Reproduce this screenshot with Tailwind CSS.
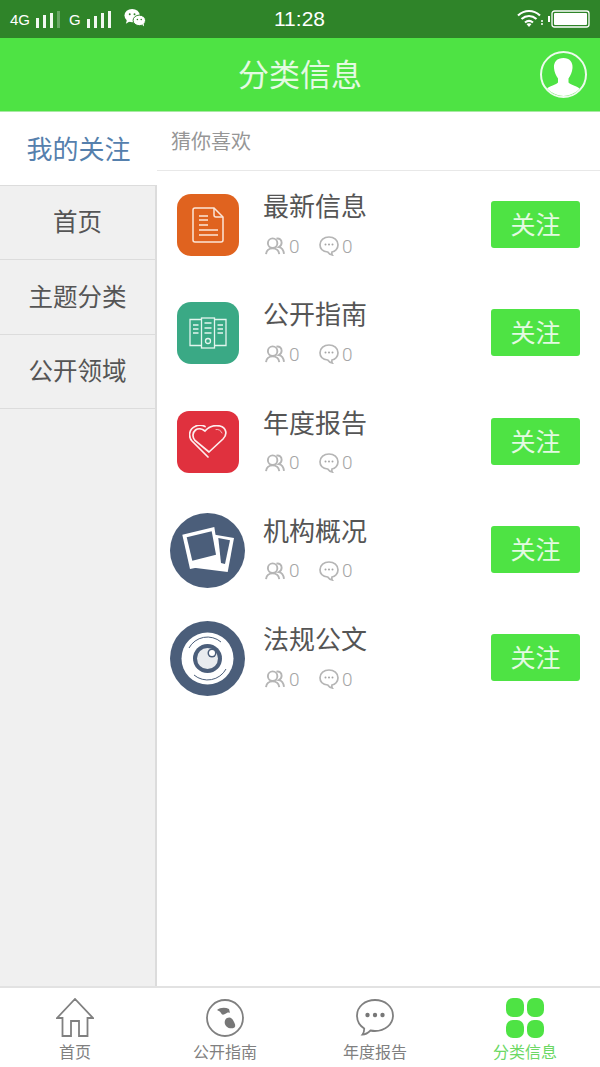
<!DOCTYPE html>
<html lang="zh-CN">
<head>
  <meta charset="UTF-8" />
  <meta name="viewport" content="width=device-width, initial-scale=1.0"/>
  <title>分类信息</title>
  <script src="https://cdn.jsdelivr.net/npm/@tailwindcss/browser@4"></script>
</head>
<body class="bg-white font-['Noto_Sans_CJK_SC','Liberation_Sans',sans-serif]">
  <div class="w-[600px] h-[1067px] flex flex-col overflow-hidden">

    <!-- Status bar -->
    <div class="h-[38px] bg-[#2f8429] text-white flex items-center pl-[10px] pr-[10px] relative font-['Liberation_Sans',sans-serif]">
      <span class="text-[15px] leading-none">4G</span>
      <svg class="ml-[6px]" width="24" height="17" viewBox="0 0 24 17" fill="#f2f8f1"><rect x="0" y="7" width="3" height="10"/><rect x="7" y="4" width="3" height="13"/><rect x="14" y="2" width="3" height="15"/><rect x="21" y="0" width="3" height="17" opacity=".3"/></svg>
      <span class="text-[15px] leading-none ml-[9px]">G</span>
      <svg class="ml-[6px]" width="24" height="17" viewBox="0 0 24 17" fill="#f2f8f1"><rect x="0" y="8" width="3" height="9"/><rect x="7" y="5" width="3" height="12"/><rect x="14" y="2" width="3" height="15"/><rect x="21" y="0" width="3" height="17"/></svg>
      <svg class="ml-[13px] mb-[3px]" width="22" height="20" viewBox="0 0 23 20" fill="#fff"><ellipse cx="8.500" cy="7.500" rx="8" ry="7"/><path d="M3 12l-1 4 5-3z"/><ellipse cx="16" cy="12.500" rx="6.500" ry="5.500" stroke="#2f8429"/><path d="M19 17l2 2-.5-4z"/><circle cx="6" cy="6" r="1" fill="#2f8429"/><circle cx="11" cy="6" r="1" fill="#2f8429"/><circle cx="14" cy="11.500" r=".8" fill="#2f8429"/><circle cx="18" cy="11.500" r=".8" fill="#2f8429"/></svg>
      <span class="absolute left-[274px] top-[7px] text-[21px] leading-[24px]">11:28</span>
      <div class="ml-auto flex items-center gap-[4px] mb-[1px]">
        <svg width="27" height="19" viewBox="0 0 27 19" fill="none" stroke="#fff" stroke-width="2.200"><path d="M1 6.500c6.500-6 15.500-6 22 0"/><path d="M4.500 10c4.500-4 10.500-4 15 0"/><path d="M8 13.500c2.500-2 5.500-2 8 0"/><path d="M12 18l-2.500-3c1.500-1 3.500-1 5 0z" fill="#fff" stroke="none"/><path d="M25 11v6" stroke-width="1.500" stroke-dasharray="2 1"/></svg>
        <svg width="42" height="18" viewBox="0 0 42 18"><rect x="0" y="6" width="2" height="6" fill="#fff"/><rect x="4" y="1" width="37" height="16" rx="2.500" fill="none" stroke="#fff" stroke-width="1.300"/><rect x="6" y="3" width="33" height="12" rx="1" fill="#fff"/></svg>
      </div>
    </div>

    <!-- Header -->
    <div class="h-[74px] bg-[#4ee344] border-b border-[#a9e8a4] flex items-center justify-center relative">
      <h1 class="text-[31px] text-[#e4fae2] font-normal leading-none mb-[4px]">分类信息</h1>
      <div class="absolute left-[540px] top-[13px] w-[47px] h-[47px] rounded-full border-2 border-[#eefbed] overflow-hidden">
        <svg width="43" height="43" viewBox="0 0 43 43" fill="#fff"><path d="M21.500 5c6 0 9.500 4 9 10-.3 4-2 8-4 10.500v4c2.500 2.500 9 3.500 13 7.500v6H3v-6c4-4 10.500-5 13-7.500v-4c-2-2.500-3.700-6.500-4-10.500-.5-6 3-10 9.500-10z"/></svg>
      </div>
    </div>

    <div class="flex flex-1 min-h-0">
      <!-- Sidebar -->
      <div class="w-[157px] shrink-0 flex flex-col">
        <div class="h-[73px] bg-white flex items-center justify-center text-[26px] leading-none text-[#5580ad] pb-[2px]">我的关注</div>
        <div class="flex-1 bg-[#f0f0f0] border-t border-r-2 border-[#dcdcdc]">
          <div class="h-[74.300px] border-b border-[#dcdcdc] flex items-center justify-center text-[24.500px] leading-none text-[#555555] pb-[2px]">首页</div>
          <div class="h-[74.300px] border-b border-[#dcdcdc] flex items-center justify-center text-[24.500px] leading-none text-[#555555] pb-[2px]">主题分类</div>
          <div class="h-[74.300px] border-b border-[#dcdcdc] flex items-center justify-center text-[24.500px] leading-none text-[#555555] pb-[2px]">公开领域</div>
        </div>
      </div>

      <!-- Content -->
      <div class="flex-1 min-w-0">
        <div class="h-[59px] border-b border-[#e8e8e8] pl-[14px] pt-[16px] text-[20px] leading-[26px] text-[#969696]">猜你喜欢</div>

        <div class="h-[108.300px] flex items-start pt-[23px]">
          <div class="w-[106px] pl-[20px] shrink-0">
            <div class="w-[62px] h-[62px] rounded-[14px] bg-[#e0631f] flex items-center justify-center">
              <svg width="32" height="36" viewBox="0 0 32 36" fill="none" stroke="#fbe6d8" stroke-width="1.500"><path d="M3 1h19l9 9v23a2 2 0 0 1-2 2H3a2 2 0 0 1-2-2V3a2 2 0 0 1 2-2z"/><path d="M22 1v7a2 2 0 0 0 2 2h7"/><path d="M7 9h9M7 13h9M7 18h9M7 23h19M7 28h19"/></svg>
            </div>
          </div>
          <div class="flex-1 min-w-0">
            <div class="text-[26px] leading-[26px] text-[#555555] -mt-[2px]">最新信息</div>
            <div class="flex items-center h-[24px] mt-[16px] ml-[2px] text-[#a5a5a5] text-[19px] leading-none font-['Roboto',sans-serif] font-light">
              <svg width="20" height="18" viewBox="0 0 21 19" fill="none" stroke="#b5b5b5" stroke-width="2"><circle cx="8" cy="6.500" r="5"/><path d="M1 18c.5-4 3-6 7-6s6.500 2 7 6"/><path d="M12 1.700c3-.8 5.500 1.300 5.500 4.500 0 2-1 3.500-3 4.500 3 .5 5 3 5.500 7"/></svg>
              <span class="ml-[4px] w-[10px]">0</span>
              <svg class="ml-[20px]" width="20" height="20" viewBox="0 0 20 20" fill="none" stroke="#b5b5b5" stroke-width="1.700"><path d="M10 1c5 0 9 3.300 9 7.800 0 4-3 6.700-6 7.200-.2 1.300-.3 2.300.2 3-2-.5-3.700-1.800-4.500-3C4 15.500 1 12.800 1 8.800 1 4.300 5 1 10 1z"/><circle cx="6.500" cy="8.500" r="1" fill="#a5a5a5" stroke="none"/><circle cx="10" cy="8.500" r="1" fill="#a5a5a5" stroke="none"/><circle cx="13.500" cy="8.500" r="1" fill="#a5a5a5" stroke="none"/></svg>
              <span class="ml-[3px]">0</span>
            </div>
          </div>
          <div class="w-[89px] h-[47px] mr-[20px] mt-[7px] shrink-0 rounded-[3px] bg-[#4ee344] flex items-center justify-center text-[25px] leading-none text-[#e4fae2] pb-[2px]">关注</div>
        </div>

        <div class="h-[108.300px] flex items-start pt-[23px]">
          <div class="w-[106px] pl-[20px] shrink-0">
            <div class="w-[62px] h-[62px] rounded-[14px] bg-[#3aa985] flex items-center justify-center">
              <svg width="38" height="32" viewBox="0 0 38 32" fill="none" stroke="#e3f5ee" stroke-width="1.300"><path d="M12.500 2.500H1v26h11.500"/><rect x="12.500" y="1" width="13" height="30"/><path d="M25.500 2.500H37v26H25.500"/><path d="M4 8h5.500M4 12h5.500M4 16h5.500M15.500 6h7M15.500 11h7M15.500 16h7M28.500 8H34M28.500 12H34M28.500 16H34"/><circle cx="19" cy="24" r="2.500"/></svg>
            </div>
          </div>
          <div class="flex-1 min-w-0">
            <div class="text-[26px] leading-[26px] text-[#555555] -mt-[2px]">公开指南</div>
            <div class="flex items-center h-[24px] mt-[16px] ml-[2px] text-[#a5a5a5] text-[19px] leading-none font-['Roboto',sans-serif] font-light">
              <svg width="20" height="18" viewBox="0 0 21 19" fill="none" stroke="#b5b5b5" stroke-width="2"><circle cx="8" cy="6.500" r="5"/><path d="M1 18c.5-4 3-6 7-6s6.500 2 7 6"/><path d="M12 1.700c3-.8 5.500 1.300 5.500 4.500 0 2-1 3.500-3 4.500 3 .5 5 3 5.500 7"/></svg>
              <span class="ml-[4px] w-[10px]">0</span>
              <svg class="ml-[20px]" width="20" height="20" viewBox="0 0 20 20" fill="none" stroke="#b5b5b5" stroke-width="1.700"><path d="M10 1c5 0 9 3.300 9 7.800 0 4-3 6.700-6 7.200-.2 1.300-.3 2.300.2 3-2-.5-3.700-1.800-4.500-3C4 15.500 1 12.800 1 8.800 1 4.300 5 1 10 1z"/><circle cx="6.500" cy="8.500" r="1" fill="#a5a5a5" stroke="none"/><circle cx="10" cy="8.500" r="1" fill="#a5a5a5" stroke="none"/><circle cx="13.500" cy="8.500" r="1" fill="#a5a5a5" stroke="none"/></svg>
              <span class="ml-[3px]">0</span>
            </div>
          </div>
          <div class="w-[89px] h-[47px] mr-[20px] mt-[7px] shrink-0 rounded-[3px] bg-[#4ee344] flex items-center justify-center text-[25px] leading-none text-[#e4fae2] pb-[2px]">关注</div>
        </div>

        <div class="h-[108.300px] flex items-start pt-[23px]">
          <div class="w-[106px] pl-[20px] shrink-0">
            <div class="w-[62px] h-[62px] rounded-[12px] bg-[#e0313e] flex items-center justify-center">
              <svg width="38" height="33" viewBox="0 0 38 33" fill="none" stroke="#fdeeee" stroke-width="1.700" stroke-linecap="round"><path d="M20 27L34 14C39 9 37 2.500 31 1C26 0 20 1.500 16 6C13 3.500 9 3 6.500 5C3.500 7.500 3 12 6 15.500L20 27"/><path d="M19 32L3 16C-1 11.500 0 4 6 1.500C9 0 13 0 16 1.500"/><path d="M27 4.500C29.500 4 32 5.500 33 8" stroke-width="1" opacity=".7"/></svg>
            </div>
          </div>
          <div class="flex-1 min-w-0">
            <div class="text-[26px] leading-[26px] text-[#555555] -mt-[2px]">年度报告</div>
            <div class="flex items-center h-[24px] mt-[16px] ml-[2px] text-[#a5a5a5] text-[19px] leading-none font-['Roboto',sans-serif] font-light">
              <svg width="20" height="18" viewBox="0 0 21 19" fill="none" stroke="#b5b5b5" stroke-width="2"><circle cx="8" cy="6.500" r="5"/><path d="M1 18c.5-4 3-6 7-6s6.500 2 7 6"/><path d="M12 1.700c3-.8 5.500 1.300 5.500 4.500 0 2-1 3.500-3 4.500 3 .5 5 3 5.500 7"/></svg>
              <span class="ml-[4px] w-[10px]">0</span>
              <svg class="ml-[20px]" width="20" height="20" viewBox="0 0 20 20" fill="none" stroke="#b5b5b5" stroke-width="1.700"><path d="M10 1c5 0 9 3.300 9 7.800 0 4-3 6.700-6 7.200-.2 1.300-.3 2.300.2 3-2-.5-3.700-1.800-4.500-3C4 15.500 1 12.800 1 8.800 1 4.300 5 1 10 1z"/><circle cx="6.500" cy="8.500" r="1" fill="#a5a5a5" stroke="none"/><circle cx="10" cy="8.500" r="1" fill="#a5a5a5" stroke="none"/><circle cx="13.500" cy="8.500" r="1" fill="#a5a5a5" stroke="none"/></svg>
              <span class="ml-[3px]">0</span>
            </div>
          </div>
          <div class="w-[89px] h-[47px] mr-[20px] mt-[7px] shrink-0 rounded-[3px] bg-[#4ee344] flex items-center justify-center text-[25px] leading-none text-[#e4fae2] pb-[2px]">关注</div>
        </div>

        <div class="h-[108.300px] flex items-start pt-[23px]">
          <div class="w-[106px] pl-[13px] shrink-0 -mt-[6px]">
            <svg width="75" height="75" viewBox="0 0 75 75"><circle cx="37.500" cy="37.500" r="37.500" fill="#4b5e7a"/><path d="M45 21.700l19 3.300-6.300 34-37.700-4.700z" fill="#fff"/><path d="M48.300 25L60 27.300 55 51l-4-1z" fill="#4b5e7a"/><path d="M12.300 21.700L44.300 14 50 50 20 56z" fill="#fff"/><path d="M16.700 24.300l25-6 4.300 23.400-23.700 6z" fill="#4b5e7a"/></svg>
          </div>
          <div class="flex-1 min-w-0">
            <div class="text-[26px] leading-[26px] text-[#555555] -mt-[2px]">机构概况</div>
            <div class="flex items-center h-[24px] mt-[16px] ml-[2px] text-[#a5a5a5] text-[19px] leading-none font-['Roboto',sans-serif] font-light">
              <svg width="20" height="18" viewBox="0 0 21 19" fill="none" stroke="#b5b5b5" stroke-width="2"><circle cx="8" cy="6.500" r="5"/><path d="M1 18c.5-4 3-6 7-6s6.500 2 7 6"/><path d="M12 1.700c3-.8 5.500 1.300 5.500 4.500 0 2-1 3.500-3 4.500 3 .5 5 3 5.500 7"/></svg>
              <span class="ml-[4px] w-[10px]">0</span>
              <svg class="ml-[20px]" width="20" height="20" viewBox="0 0 20 20" fill="none" stroke="#b5b5b5" stroke-width="1.700"><path d="M10 1c5 0 9 3.300 9 7.800 0 4-3 6.700-6 7.200-.2 1.300-.3 2.300.2 3-2-.5-3.700-1.800-4.500-3C4 15.500 1 12.800 1 8.800 1 4.300 5 1 10 1z"/><circle cx="6.500" cy="8.500" r="1" fill="#a5a5a5" stroke="none"/><circle cx="10" cy="8.500" r="1" fill="#a5a5a5" stroke="none"/><circle cx="13.500" cy="8.500" r="1" fill="#a5a5a5" stroke="none"/></svg>
              <span class="ml-[3px]">0</span>
            </div>
          </div>
          <div class="w-[89px] h-[47px] mr-[20px] mt-[7px] shrink-0 rounded-[3px] bg-[#4ee344] flex items-center justify-center text-[25px] leading-none text-[#e4fae2] pb-[2px]">关注</div>
        </div>

        <div class="h-[108.300px] flex items-start pt-[23px]">
          <div class="w-[106px] pl-[13px] shrink-0 -mt-[6px]">
            <svg width="75" height="75" viewBox="0 0 75 75"><circle cx="37.500" cy="37.500" r="37.500" fill="#4b5e7a"/><circle cx="37.500" cy="37.500" r="26" fill="#fff"/><path d="M19 27a21 21 0 0 1 32-6" fill="none" stroke="#4b5e7a" stroke-width="1"/><path d="M56 48a21 21 0 0 1-32 6" fill="none" stroke="#4b5e7a" stroke-width="1"/><circle cx="37.500" cy="37.500" r="14.500" fill="#4b5e7a"/><circle cx="37.500" cy="37.500" r="10.500" fill="#e8ebef"/><circle cx="42" cy="32" r="4.500" fill="#4b5e7a"/><circle cx="42" cy="32" r="3" fill="#fff"/></svg>
          </div>
          <div class="flex-1 min-w-0">
            <div class="text-[26px] leading-[26px] text-[#555555] -mt-[2px]">法规公文</div>
            <div class="flex items-center h-[24px] mt-[16px] ml-[2px] text-[#a5a5a5] text-[19px] leading-none font-['Roboto',sans-serif] font-light">
              <svg width="20" height="18" viewBox="0 0 21 19" fill="none" stroke="#b5b5b5" stroke-width="2"><circle cx="8" cy="6.500" r="5"/><path d="M1 18c.5-4 3-6 7-6s6.500 2 7 6"/><path d="M12 1.700c3-.8 5.500 1.300 5.500 4.500 0 2-1 3.500-3 4.500 3 .5 5 3 5.500 7"/></svg>
              <span class="ml-[4px] w-[10px]">0</span>
              <svg class="ml-[20px]" width="20" height="20" viewBox="0 0 20 20" fill="none" stroke="#b5b5b5" stroke-width="1.700"><path d="M10 1c5 0 9 3.300 9 7.800 0 4-3 6.700-6 7.200-.2 1.300-.3 2.300.2 3-2-.5-3.700-1.800-4.500-3C4 15.500 1 12.800 1 8.800 1 4.300 5 1 10 1z"/><circle cx="6.500" cy="8.500" r="1" fill="#a5a5a5" stroke="none"/><circle cx="10" cy="8.500" r="1" fill="#a5a5a5" stroke="none"/><circle cx="13.500" cy="8.500" r="1" fill="#a5a5a5" stroke="none"/></svg>
              <span class="ml-[3px]">0</span>
            </div>
          </div>
          <div class="w-[89px] h-[47px] mr-[20px] mt-[7px] shrink-0 rounded-[3px] bg-[#4ee344] flex items-center justify-center text-[25px] leading-none text-[#e4fae2] pb-[2px]">关注</div>
        </div>
      </div>
    </div>

    <!-- Bottom tabs -->
    <div class="h-[81px] shrink-0 border-t-2 border-[#e2e2e2] grid grid-cols-4 bg-white">
      <div class="flex flex-col items-center pt-[10px] text-[16px] leading-[20px] text-[#808080]">
        <svg width="38" height="40" viewBox="0 0 38 40" fill="none" stroke="#808080" stroke-width="1.800"><path d="M1 20L19 1l18 19h-5.500v18H23V23h-8v15H6.500V20z"/></svg>
        <span class="mt-[3px]">首页</span>
      </div>
      <div class="flex flex-col items-center pt-[10px] text-[16px] leading-[20px] text-[#808080]">
        <svg width="38" height="40" viewBox="0 0 38 40"><circle cx="19" cy="20" r="18" fill="none" stroke="#808080" stroke-width="1.800"/><path d="M11 12c3-2.500 8-3 12-1l1 4c-2-1-3 0-5 1-2 1-3 1-4-1-1-1.500-2-2-4-3z" fill="#777"/><path d="M21 20c3-1.500 5 0 6.500 3 1.500 3 2.500 5 1 6.500-2.500 1.500-6 1-8-1-2.500-2.500-2.500-6.500.5-8.500z" fill="#777"/></svg>
        <span class="mt-[3px]">公开指南</span>
      </div>
      <div class="flex flex-col items-center pt-[10px] text-[16px] leading-[20px] text-[#808080]">
        <svg width="38" height="40" viewBox="0 0 38 40" fill="none" stroke="#808080" stroke-width="1.800"><path d="M19 2c9.800 0 18 6.500 18 15.500S28.800 33 19 33c-1.500 0-3-.2-4.500-.5C12 35 9 36.500 6.500 36.500c1-1.200 1.800-3 1.700-6C4 27.800 1 23 1 17.500 1 8.500 9.200 2 19 2z"/><circle cx="11.500" cy="17" r="2.200" fill="#777" stroke="none"/><circle cx="19" cy="17" r="2.200" fill="#777" stroke="none"/><circle cx="26.500" cy="17" r="2.200" fill="#777" stroke="none"/></svg>
        <span class="mt-[3px]">年度报告</span>
      </div>
      <div class="flex flex-col items-center pt-[10px] text-[16px] leading-[20px] text-[#6cd864]">
        <div class="w-[38px] h-[40px] grid grid-cols-2 gap-[3px]">
          <div class="rounded-[7px] bg-[#4ee344]"></div>
          <div class="rounded-[7px] bg-[#4ee344]"></div>
          <div class="rounded-[7px] bg-[#4ee344]"></div>
          <div class="rounded-[7px] bg-[#4ee344]"></div>
        </div>
        <span class="mt-[3px]">分类信息</span>
      </div>
    </div>
  </div>
</body>
</html>
